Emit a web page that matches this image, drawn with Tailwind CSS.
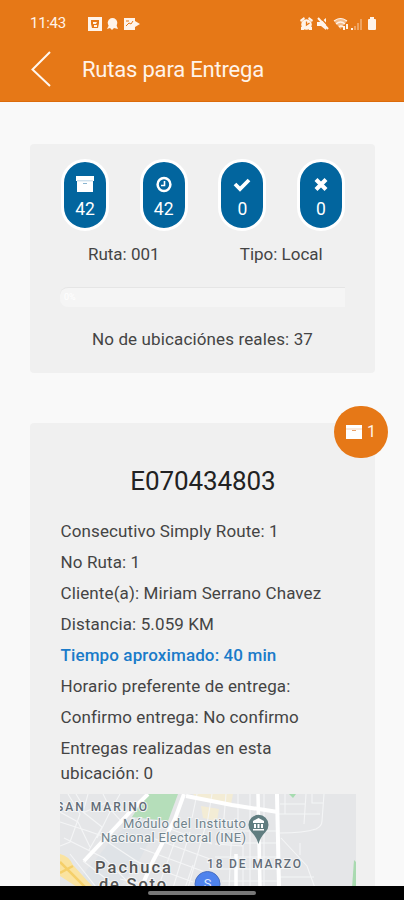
<!DOCTYPE html>
<html lang="es">
<head>
<meta charset="utf-8">
<meta name="viewport" content="width=device-width, initial-scale=1">
<title>Rutas para Entrega</title>
<script src="https://cdn.jsdelivr.net/npm/@tailwindcss/browser@4"></script>
</head>
<body class="bg-[#f9f9f9] font-[Roboto,sans-serif] text-[#444] overflow-hidden">
<div class="flex flex-col w-[404px] h-[900px] overflow-hidden">
  <header class="h-[102px] shrink-0 bg-[#e67817] text-[#fff3e9] border-b border-[#dc6b0b]">
    <div class="flex items-center h-[46px] pl-[30px] pr-[27px] pt-[1px]">
      <span class="text-[15px] w-[58px] tracking-[-0.3px]">11:43</span>
      <svg class="w-[52px] h-[16px]" viewBox="0 0 52 16" fill="#fff3e9">
        <path d="M0 1h14v14H0z"/><path d="M3 4h8v3l-1 5H4L3 8z" fill="#e67817"/><path d="M5 6h4l-1 2H5zM6 9h3v2H6z"/>
        <circle cx="24.500" cy="6.800" r="4.800"/><path d="M21 9l-2 4 3-1 2 2 2-2 4 1-2-5z"/>
        <path d="M36 2h11v3l5 3-5 3v3H36z"/><path d="M38 10l3-3 2 1 2-3M38 5h3" stroke="#e67817" fill="none"/>
      </svg>
      <svg class="ml-auto w-[77px] h-[16px]" viewBox="0 0 77 16" fill="#fff3e9">
        <circle cx="6.500" cy="8.500" r="5.300"/><path d="M0 4l4-3 1 2-4 3zM13 4L9 1 8 3l4 3zM1 11h3v3H1zM9 11h3v3H9z"/><path d="M6.500 5.500V9l3-2" stroke="#e67817" stroke-width="1.300" fill="none"/>
        <path d="M17 6h4l5-4v12l-5-4h-4z"/><path d="M20 1l9 10" stroke="#e67817" stroke-width="1.300"/><path d="M18 2l10 11" stroke="#fff3e9" stroke-width="2"/>
        <path d="M34 5q6.500-6 13 0l-6.500 8z" opacity=".55"/><path d="M34 5q6.500-5 13 0M36 8q4.500-4 9 0M39 11q2-2 4 0" fill="none" stroke="#fff3e9" stroke-width="1.200"/><path d="M43 10h2v4h-2zM46 8h2v5h-2z"/>
        <path d="M51 12h2v2h-2z"/><path d="M54 10h2v4h-2zM57 7h2v7h-2zM60 3h2v11h-2z" opacity=".35"/>
        <path d="M70 1h4v2h1q1 0 1 1v9q0 1-1 1h-6q-1 0-1-1V4q0-1 1-1h1z"/>
      </svg>
    </div>
    <div class="flex items-center h-[46px] pl-[30px]">
      <svg class="w-[22px] h-[38px]" viewBox="0 0 22 38" fill="none" stroke="#fff7f0" stroke-width="2"><path d="M20 2L2.500 19.500 20 36"/></svg>
      <h1 class="ml-[30px] mt-px text-[22px] leading-[26px] tracking-[-0.2px]">Rutas para Entrega</h1>
    </div>
  </header>

  <main class="h-[784px] shrink-0 overflow-hidden pl-[30px] pr-[29px] pt-[42px]">
    <section class="h-[229px] rounded-[4px] bg-[#f0f0f0] pt-[15px]">
      <div class="flex justify-between pl-[31px] pr-[30px] text-white text-[17.5px] leading-[20px]">
        <div class="w-[48px] h-[72px] rounded-full bg-[#02659e] border-[3px] border-white flex flex-col items-center pt-[13px]">
          <svg class="w-[18px] h-[18px]" viewBox="0 0 18 18"><path d="M0 1h18v5H0zM1 6h16V17H1z" fill="#fff"/><path d="M1 5.800h16" stroke="#8ab5d0" stroke-width=".6"/><path d="M7 8.500h4" stroke="#8ab5d0"/></svg>
          <span class="mt-[6px]">42</span>
        </div>
        <div class="w-[48px] h-[72px] rounded-full bg-[#02659e] border-[3px] border-white flex flex-col items-center pt-[13px]">
          <svg class="w-[18px] h-[18px]" viewBox="0 0 18 18" fill="none" stroke="#fff"><circle cx="9" cy="9.500" r="6.400" stroke-width="2.500"/><path d="M9.500 6v4.500H6" stroke-width="1.600"/></svg>
          <span class="mt-[6px]">42</span>
        </div>
        <div class="w-[48px] h-[72px] rounded-full bg-[#02659e] border-[3px] border-white flex flex-col items-center pt-[13px]">
          <svg class="w-[18px] h-[18px]" viewBox="0 0 18 18" fill="none" stroke="#fff" stroke-width="3.800"><path d="M2 9l5 5L16 5"/></svg>
          <span class="mt-[6px]">0</span>
        </div>
        <div class="w-[48px] h-[72px] rounded-full bg-[#02659e] border-[3px] border-white flex flex-col items-center pt-[13px]">
          <svg class="w-[18px] h-[18px]" viewBox="0 0 18 18" fill="none" stroke="#fff" stroke-width="4.200"><path d="M4 4.500l10 10M14 4.500l-10 10"/></svg>
          <span class="mt-[6px]">0</span>
        </div>
      </div>
      <div class="grid grid-cols-2 text-center text-[17px] leading-[24px] mt-[11px] pl-[15px] pr-[15px]">
        <span>Ruta: 001</span><span>Tipo: Local</span>
      </div>
      <div class="mx-[30px] mt-[21px] h-[20px] rounded-l-[8px] bg-[#f5f5f5] border-t border-[#e5e5e5] flex items-center pl-[4px]"><span class="text-[9px] text-white">0%</span></div>
      <p class="text-center text-[17px] leading-[24px] mt-[20px] tracking-[0.13px]">No de ubicaciónes reales: 37</p>
    </section>

    <section class="relative mt-[50px] rounded-[4px] bg-[#f0f0f0] h-[500px] pt-[41px] px-[30px]">
      <div class="absolute top-[-17px] right-[-13px] w-[54px] h-[52px] rounded-full bg-[#e67817] flex items-center justify-center gap-[5px] text-[16px] text-[#fff3e9]">
        <svg class="w-[16px] h-[16px]" viewBox="0 0 16 16"><path d="M0 1h16v14H0z" fill="#fff"/><path d="M0 5h16" stroke="#e9a26a" stroke-width=".5"/><path d="M6 6.500h4" stroke="#e9a26a"/></svg>
        <span>1</span>
      </div>
      <h2 class="text-center text-[26px] leading-[34px] tracking-[-0.1px] pl-px text-[#222]">E070434803</h2>
      <div class="mt-[21px] flex flex-col gap-[6px] pl-[0.5px] text-[17px] leading-[25px] tracking-[0.12px]">
        <p>Consecutivo Simply Route: 1</p>
        <p>No Ruta: 1</p>
        <p>Cliente(a): Miriam Serrano Chavez</p>
        <p>Distancia: 5.059 KM</p>
        <p class="text-[#1a7bc9] font-medium">Tiempo aproximado: 40 min</p>
        <p>Horario preferente de entrega:</p>
        <p>Confirmo entrega: No confirmo</p>
        <p>Entregas realizadas en esta<br>ubicación: 0</p>
      </div>
      <svg class="mt-[8px] w-[296px] h-[94px]" viewBox="0 0 296 94" font-family="Roboto, sans-serif">
        <rect width="296" height="94" fill="#e5e6e8"/>
        <path d="M55 42l44-36 8 6-28 55-20 27H12z" fill="#dfe3e7"/>
        <path d="M87 0h31l-10 27-36-4z" fill="#b5deba"/>
        <path d="M133 0h40l-2 10-32-4zM141 12l18 3-2 12-14-3z" fill="#f3ecd5"/>
        <g fill="none" stroke="#f4f5f6" stroke-width="1.100">
          <path d="M0 8l25 10 20-9 24 10M8 0l12 20-10 28-10 4M28 0l-5 18 19 15-13 23M0 28l28 9 20 7M43 0l8 16-14 28M4 44l40 20 30 30M0 18l18 10 12 25M16 0l6 10M60 0l-9 16 10 11M23 67l35 27M10 60l26 33M43 45l38 25"/>
          <path d="M73 66l60 22M80 54l65 24M87 42l63 23M96 30l56 20M98 94l18-50M113 94l17-56M128 94l17-60M84 88l16-34M125 94l8-23M60 85l40 9M155 50l28 2M155 63h63M150 75h68M162 87h56"/>
          <path d="M137 0l-5 24M152 0l-5 30M166 0l-3 35M178 0v34M190 0v94M204 0v94M172 33l-3 61M183 45v49M160 37h58M158 49h60"/>
          <path d="M218 20h42M220 39q24 0 36-4 6-3 6-8l2-27M225 0v20M246 0l-2 30M252 0v9h11M221 44l26 28 8 22M240 49v12M220 83h34M220 10h25"/>
        </g>
        <g fill="none" stroke="#fff">
          <path d="M88 0L72 16 24 67" stroke-width="4"/>
          <path d="M124 0l-9 25-22 42-12 27" stroke-width="4"/>
          <path d="M126 2l46 9 46 7" stroke-width="4"/>
          <path d="M217 0l2 94" stroke-width="4"/>
          <path d="M198 0l2 94M176 60v34" stroke-width="3.500"/>
        </g>
        <path d="M0 60q9 2 13 11l20 22H17L0 82z" fill="#fae3a0"/><path d="M0 68l26 26M0 79l13-7" stroke="#f5cf69" stroke-width="2.500" fill="none"/>
        <path d="M229 0h7l-3 4z" fill="#a6dcb0"/><path d="M294 66l2 2v26h-4z" fill="#a9dab0"/>
        <g stroke="#f4f5f6" stroke-width="2" paint-order="stroke">
          <text x="-4" y="17" font-size="12" font-weight="500" textLength="91" fill="#616b76">SAN MARINO</text>
          <text x="63" y="34" font-size="13" textLength="123" fill="#71838c">Módulo del Instituto</text>
          <text x="41" y="48" font-size="13" textLength="145" fill="#71838c">Nacional Electoral (INE)</text>
          <text x="147" y="74" font-size="12" font-weight="500" textLength="94" fill="#616b76">18 DE MARZO</text>
          <text x="35" y="79" font-size="16.500" font-weight="500" textLength="76" fill="#555">Pachuca</text>
          <text x="39" y="96" font-size="16.500" font-weight="500" textLength="67" fill="#555">de Soto</text>
        </g>
        <path d="M198.500 50q-2-7-7-12a10 10 0 1 1 14 0q-5 5-7 12z" fill="#607d80"/>
        <path d="M193 29v-2l5.500-3 5.500 3v2zM194 30h2v4h-2zM197.500 30h2v4h-2zM201 30h2v4h-2zM193 35h11v1.500h-11z" fill="#fff"/>
        <circle cx="147.500" cy="90" r="12.500" fill="#4f83ed" stroke="#496fc0"/>
        <text x="147.500" y="94" font-size="13" text-anchor="middle" fill="#dce8ff">S</text>
      </svg>
    </section>
  </main>
  <footer class="h-[14px] shrink-0 bg-black flex justify-center pt-[5px]"><div class="w-[108px] h-[4px] rounded-full bg-[#777]"></div></footer>
</div>
</body>
</html>
